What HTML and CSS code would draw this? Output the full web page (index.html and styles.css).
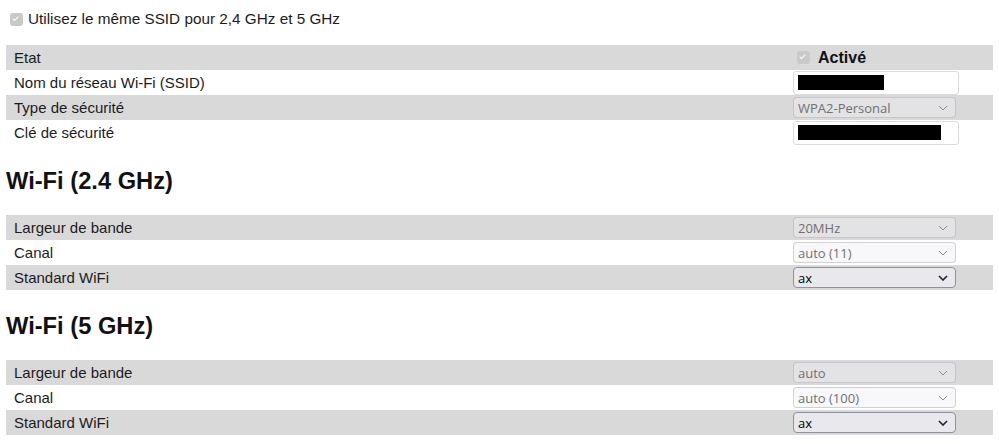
FILE: index.html
```html
<!doctype html>
<html lang="fr">
	<head>
		<meta charset="utf-8">
		<title>Wi-Fi</title>
		<link rel="stylesheet" href="styles.css">
	</head>
	<body>

		<main class="wifi">

			<label class="same-ssid">
				<input type="checkbox" checked disabled>
				<span>Utilisez le même SSID pour 2,4 GHz et 5 GHz</span>
			</label>

			<div class="settings">
				<div class="row">
					<div class="label">Etat</div>
					<div class="control">
						<label class="state"><input type="checkbox" checked disabled> Activé</label>
					</div>
				</div>
				<div class="row">
					<div class="label">Nom du réseau Wi-Fi (SSID)</div>
					<div class="control">
						<div class="field"><span class="redacted redacted--short"></span></div>
					</div>
				</div>
				<div class="row">
					<div class="label">Type de sécurité</div>
					<div class="control">
						<div class="select is-disabled">
							<select disabled><option>WPA2-Personal</option></select>
							<svg class="chevron" viewBox="0 0 10 6" width="10" height="6"><path d="M1 1l4 4 4-4"/></svg>
						</div>
					</div>
				</div>
				<div class="row">
					<div class="label">Clé de sécurité</div>
					<div class="control">
						<div class="field"><span class="redacted redacted--long"></span></div>
					</div>
				</div>
			</div>

			<h2 class="band-title">Wi-Fi (2.4 GHz)</h2>

			<div class="settings">
				<div class="row">
					<div class="label">Largeur de bande</div>
					<div class="control">
						<div class="select is-disabled">
							<select disabled><option>20MHz</option></select>
							<svg class="chevron" viewBox="0 0 10 6" width="10" height="6"><path d="M1 1l4 4 4-4"/></svg>
						</div>
					</div>
				</div>
				<div class="row">
					<div class="label">Canal</div>
					<div class="control">
						<div class="select is-disabled">
							<select disabled><option>auto (11)</option></select>
							<svg class="chevron" viewBox="0 0 10 6" width="10" height="6"><path d="M1 1l4 4 4-4"/></svg>
						</div>
					</div>
				</div>
				<div class="row">
					<div class="label">Standard WiFi</div>
					<div class="control">
						<div class="select">
							<select><option>ax</option></select>
							<svg class="chevron" viewBox="0 0 10 6" width="10" height="6"><path d="M1 1l4 4 4-4"/></svg>
						</div>
					</div>
				</div>
			</div>

			<h2 class="band-title">Wi-Fi (5 GHz)</h2>

			<div class="settings">
				<div class="row">
					<div class="label">Largeur de bande</div>
					<div class="control">
						<div class="select is-disabled">
							<select disabled><option>auto</option></select>
							<svg class="chevron" viewBox="0 0 10 6" width="10" height="6"><path d="M1 1l4 4 4-4"/></svg>
						</div>
					</div>
				</div>
				<div class="row">
					<div class="label">Canal</div>
					<div class="control">
						<div class="select is-disabled">
							<select disabled><option>auto (100)</option></select>
							<svg class="chevron" viewBox="0 0 10 6" width="10" height="6"><path d="M1 1l4 4 4-4"/></svg>
						</div>
					</div>
				</div>
				<div class="row">
					<div class="label">Standard WiFi</div>
					<div class="control">
						<div class="select">
							<select><option>ax</option></select>
							<svg class="chevron" viewBox="0 0 10 6" width="10" height="6"><path d="M1 1l4 4 4-4"/></svg>
						</div>
					</div>
				</div>
			</div>

		</main>

	</body>
</html>
```

FILE: styles.css
```css
/* -------------------------------------------------- */

:root
{
	--stripe: #d9d9d9;
	--text: #1c1c1c;
	--control: #e9e9ed;
	--control-border: #8f8f9d;
}

*, *::before, *::after { box-sizing: border-box; }

body
{
	margin: 0;
	padding: 9px 6px 0;

	font-family: "Liberation Sans", Arial, sans-serif;
	font-size: 15px;
	line-height: 1.2;

	background: white;
	color: var( --text );
}

/* -------------------------------------------------- */

/* Greyed-out, ticked checkbox */

.same-ssid input,
.state input
{
	appearance: none;
	position: relative;

	width: 13px;
	height: 13px;
	margin: 0;

	background: #c9c9c9;
	border-radius: 3px;
}

.same-ssid input::after,
.state input::after
{
	content: "";
	position: absolute;
	left: 4px;
	top: 2px;

	width: 3px;
	height: 6px;

	border: solid white;
	border-width: 0 1.5px 1.5px 0;
	transform: rotate( 45deg );
}

.same-ssid
{
	display: flex;
	align-items: center;
	gap: 5px;

	height: 20px;
	padding-left: 4px;

	font-size: 15.3px;
}

/* -------------------------------------------------- */

.settings
{
	margin-top: 16px;
}

.band-title + .settings
{
	margin-top: 0;
}

.row
{
	display: grid;
	grid-template-columns: 787px 1fr;
	align-items: center;

	height: 25px;
}

.row:nth-child( odd )
{
	background: var( --stripe );
}

.label
{
	padding-left: 8px;
}

.control
{
	display: flex;
	align-items: center;
}

/* -------------------------------------------------- */

.band-title
{
	margin: 22px 0 20px;

	font-size: 23.7px;
	line-height: 28px;
	font-weight: bold;
	color: #111;
}

/* -------------------------------------------------- */

.state
{
	display: flex;
	align-items: center;
	gap: 8px;

	padding-left: 4px;

	font-size: 16px;
	font-weight: bold;
	color: #111;
}

.field
{
	display: flex;
	align-items: center;

	width: 166px;
	height: 24px;
	padding: 0 4px;

	background: white;
	border: 1px solid #dcdcdc;
	border-radius: 3px;
}

.redacted
{
	display: block;
	height: 15px;
	background: black;
}

.redacted--short { width: 86px; }
.redacted--long { width: 143px; }

/* -------------------------------------------------- */

.select
{
	position: relative;
	width: 163px;
}

.select select
{
	appearance: none;

	width: 100%;
	height: 21px;
	padding: 0 20px 0 4px;

	font-family: "Open Sans", "Segoe UI", sans-serif;
	font-size: 13px;

	background: var( --control );
	border: 1px solid var( --control-border );
	border-radius: 4px;
	color: black;
}

.select.is-disabled select
{
	background: rgba( 240,240,243 , 0.45 );
	border-color: rgba( 160,160,170 , 0.45 );
	color: #707070;
	opacity: 1;
}

.chevron
{
	position: absolute;
	right: 8px;
	top: 8px;

	fill: none;
	stroke: #222;
	stroke-width: 1.6;
}

.is-disabled .chevron
{
	stroke: #8c8c8c;
	stroke-width: 1;
}

/* -------------------------------------------------- */
```
